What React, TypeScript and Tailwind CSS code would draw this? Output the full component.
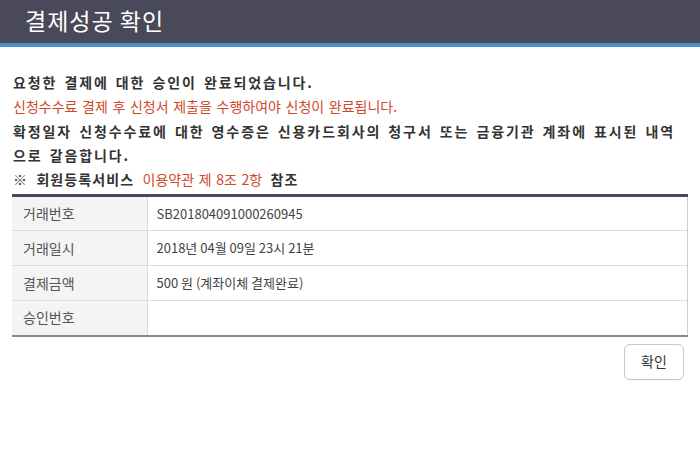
import React from 'react';

const rows = [
  { label: '거래번호', value: 'SB201804091000260945' },
  { label: '거래일시', value: '2018년 04월 09일 23시 21분' },
  { label: '결제금액', value: '500 원 (계좌이체 결제완료)' },
  { label: '승인번호', value: '' },
];

const App: React.FC = () => {
  return (
    <div
      className="w-[700px] h-[458px] bg-white overflow-hidden"
      style={{ fontFamily: '"Noto Sans CJK KR", "Noto Sans", sans-serif' }}
    >
      <header className="h-[47px] bg-[#4a4959] flex items-center pl-[25px] pb-[3px] box-border border-b-4 border-[#4a8fc8]">
        <h1 className="text-[23px] text-white font-normal leading-none tracking-[1px]">결제성공 확인</h1>
      </header>

      <div className="px-[12px] pt-[23px]">
        <div className="text-[14px] leading-[24px] text-[#333] pl-px">
          <p className="font-bold tracking-[1.9px] [word-spacing:2px]">요청한 결제에 대한 승인이 완료되었습니다.</p>
          <p className="text-[#d0482c] tracking-[0px] [word-spacing:1.5px]">
            신청수수료 결제 후 신청서 제출을 수행하여야 신청이 완료됩니다.
          </p>
          <p className="font-bold tracking-[1.9px] [word-spacing:2px] mt-px whitespace-nowrap">
            확정일자 신청수수료에 대한 영수증은 신용카드회사의 청구서 또는 금융기관 계좌에 표시된 내역
            <br />
            으로 갈음합니다.
          </p>
          <p className="font-bold tracking-[1.1px] [word-spacing:4px]">
            ※ 회원등록서비스{' '}
            <span className="font-normal text-[#d0482c] tracking-[0px] [word-spacing:1.5px]">이용약관 제 8조 2항</span>{' '}
            참조
          </p>
        </div>

        <table className="w-full mt-[3px] border-collapse border-t-[3px] border-t-[#4a4959] border-b-2 border-b-[#8a8a8a]">
          <tbody>
            {rows.map((row) => (
              <tr key={row.label} className="h-[35px] border-b border-[#dcdcdc] last:border-b-0">
                <th className="w-[135px] bg-[#f4f4f4] text-left font-normal text-[14px] text-[#555] pl-[11px] border-r border-[#dcdcdc]">
                  {row.label}
                </th>
                <td className="text-[13px] text-[#444] pl-[9px] border-r border-[#d0d0d0]">{row.value}</td>
              </tr>
            ))}
          </tbody>
        </table>

        <div className="flex justify-end mt-[7px] pr-[4px]">
          <button className="w-[60px] h-[36px] border border-[#c8c8c8] rounded-[6px] bg-white text-[14px] text-[#333] shadow-[0_1px_1px_rgba(0,0,0,0.05)]">
            확인
          </button>
        </div>
      </div>
    </div>
  );
};

export default App;
